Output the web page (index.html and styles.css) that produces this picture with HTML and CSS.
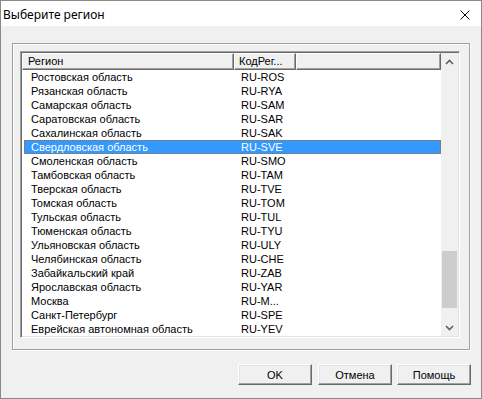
FILE: index.html
```html
<!DOCTYPE html>
<html lang="ru">
<head>
  <meta charset="UTF-8">
  <title>Выберите регион</title>
  <link rel="stylesheet" href="styles.css">
</head>
<body>

  <div class="window">
    <!-- Title bar -->
    <div class="titlebar">
      <span class="title">Выберите регион</span>
      <svg class="close" width="10" height="10" viewBox="0 0 10 10">
        <path d="M0.5 0.5 L9.5 9.5 M9.5 0.5 L0.5 9.5" stroke="#000" stroke-width="1" fill="none"/>
      </svg>
    </div>

    <div class="client">
      <div class="groupbox">
        <div class="listview">
          <div class="list">
            <div class="header">
              <div class="hcell col-name">Регион</div>
              <div class="hcell col-code">КодРег...</div>
              <div class="hcell col-rest"></div>
            </div>
            <div class="rows">
              <div class="row"><span class="c1">Ростовская область</span><span class="c2">RU-ROS</span></div>
              <div class="row"><span class="c1">Рязанская область</span><span class="c2">RU-RYA</span></div>
              <div class="row"><span class="c1">Самарская область</span><span class="c2">RU-SAM</span></div>
              <div class="row"><span class="c1">Саратовская область</span><span class="c2">RU-SAR</span></div>
              <div class="row"><span class="c1">Сахалинская область</span><span class="c2">RU-SAK</span></div>
              <div class="row selected"><span class="c1">Свердловская область</span><span class="c2">RU-SVE</span></div>
              <div class="row"><span class="c1">Смоленская область</span><span class="c2">RU-SMO</span></div>
              <div class="row"><span class="c1">Тамбовская область</span><span class="c2">RU-TAM</span></div>
              <div class="row"><span class="c1">Тверская область</span><span class="c2">RU-TVE</span></div>
              <div class="row"><span class="c1">Томская область</span><span class="c2">RU-TOM</span></div>
              <div class="row"><span class="c1">Тульская область</span><span class="c2">RU-TUL</span></div>
              <div class="row"><span class="c1">Тюменская область</span><span class="c2">RU-TYU</span></div>
              <div class="row"><span class="c1">Ульяновская область</span><span class="c2">RU-ULY</span></div>
              <div class="row"><span class="c1">Челябинская область</span><span class="c2">RU-CHE</span></div>
              <div class="row"><span class="c1">Забайкальский край</span><span class="c2">RU-ZAB</span></div>
              <div class="row"><span class="c1">Ярославская область</span><span class="c2">RU-YAR</span></div>
              <div class="row"><span class="c1">Москва</span><span class="c2">RU-M...</span></div>
              <div class="row"><span class="c1">Санкт-Петербург</span><span class="c2">RU-SPE</span></div>
              <div class="row"><span class="c1">Еврейская автономная область</span><span class="c2">RU-YEV</span></div>
            </div>
          </div>

          <!-- Vertical scrollbar -->
          <div class="scrollbar">
            <div class="sb-btn">
              <svg width="9" height="6" viewBox="0 0 9 6"><path d="M1 5 L4.5 1.5 L8 5" stroke="#606060" stroke-width="1.6" fill="none"/></svg>
            </div>
            <div class="sb-track">
              <div class="sb-thumb"></div>
            </div>
            <div class="sb-btn">
              <svg width="9" height="6" viewBox="0 0 9 6"><path d="M1 1 L4.5 4.5 L8 1" stroke="#606060" stroke-width="1.6" fill="none"/></svg>
            </div>
          </div>
        </div>
      </div>

      <div class="buttons">
        <button class="btn">OK</button>
        <button class="btn">Отмена</button>
        <button class="btn">Помощь</button>
      </div>
    </div>
  </div>

</body>
</html>
```

FILE: styles.css
```css
* {
  box-sizing: border-box;
}

body {
  margin: 0;
  background: #f0f0f0;
  font-family: 'Liberation Sans', Arial, sans-serif;
  font-size: 11px;
  color: #000;
}

.window {
  width: 482px;
  height: 399px;
  border: 1px solid #8a8a8a;
  background: #f0f0f0;
  display: flex;
  flex-direction: column;
}

.titlebar {
  height: 25px;
  background: #fff;
  display: flex;
  align-items: center;
  justify-content: space-between;
  padding: 0 11px 0 2px;
}

.title {
  font-family: 'Noto Sans', 'Open Sans', sans-serif;
  font-size: 12px;
  margin-top: 1px;
}

.close {
  display: block;
  margin-top: 3px;
}

.client {
  flex: 1;
  padding: 17px 0 0 11px;
}

/* etched frame */
.groupbox {
  width: 458px;
  height: 307px;
  border: 1px solid #a0a0a0;
  box-shadow: inset 1px 1px #fff, 1px 1px #fff;
  padding: 7px 0 0 7px;
}

.listview {
  width: 440px;
  height: 287px;
  border: 1px solid;
  border-color: #a0a0a0 #fff #fff #a0a0a0;
  box-shadow: inset 1px 1px #696969, inset -1px -1px #e3e3e3;
  padding: 1px;
  background: #fff;
  display: flex;
}

.list {
  width: 419px;
  display: flex;
  flex-direction: column;
}

.header {
  height: 17px;
  display: flex;
}

.hcell {
  height: 17px;
  background: #f0f0f0;
  border: 1px solid;
  border-color: #fff #696969 #696969 #fff;
  box-shadow: inset -1px -1px #a0a0a0;
  line-height: 14px;
  white-space: nowrap;
  overflow: hidden;
}

.col-name {
  width: 212px;
  padding-left: 5px;
}

.col-code {
  width: 62px;
  padding-left: 4px;
}

.col-rest {
  flex: 1;
}

.row {
  height: 14px;
  line-height: 14px;
  margin-left: 2px;
  display: flex;
  white-space: nowrap;
}

.row .c1 {
  width: 210px;
  padding-left: 7px;
}

.row .c2 {
  padding-left: 7px;
}

.row.selected {
  background: #3399ff;
  color: #fff;
  outline: 1px dotted #b86a10;
  outline-offset: -1px;
}

.scrollbar {
  width: 17px;
  background: #f0f0f0;
  display: flex;
  flex-direction: column;
}

.sb-btn {
  height: 17px;
  display: flex;
  align-items: center;
  justify-content: center;
}

.sb-track {
  flex: 1;
  padding-top: 181px;
}

.sb-thumb {
  height: 57px;
  margin: 0 1px;
  background: #cdcdcd;
}

.buttons {
  display: flex;
  justify-content: flex-end;
  gap: 5px;
  padding: 14px 10px 0 0;
}

.btn {
  width: 74px;
  height: 21px;
  margin: 0;
  padding: 0;
  font-family: 'Liberation Sans', Arial, sans-serif;
  font-size: 11px;
  color: #000;
  background: #f0f0f0;
  border: 1px solid;
  border-color: #fff #696969 #696969 #fff;
  box-shadow: inset -1px -1px #a0a0a0, inset 1px 1px #e3e3e3;
  border-radius: 0;
}

.btn:first-child {
  margin-right: 1px;
}
```
